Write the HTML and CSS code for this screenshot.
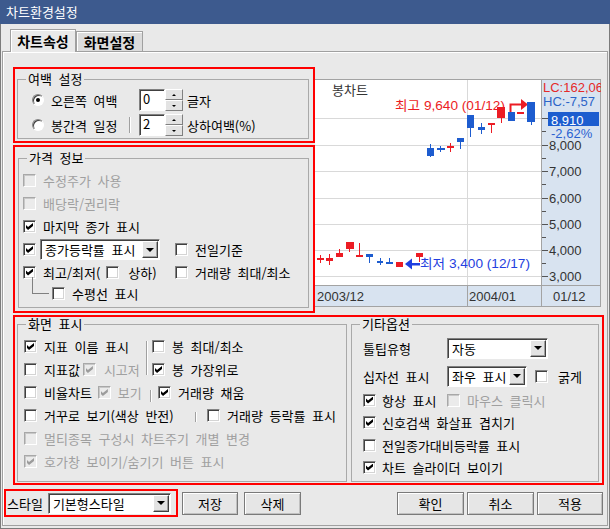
FILE: index.html
```html
<!DOCTYPE html>
<html lang="ko">
<head>
<meta charset="utf-8">
<title>차트환경설정</title>
<link rel="stylesheet" href="styles.css">
</head>
<body>
<div class="window">
  <div class="titlebar">차트환경설정</div>
  <div class="client">
    <div class="tabs">
      <div class="tab tab-active">차트속성</div>
      <div class="tab">화면설정</div>
    </div>
    <div class="panel">
      <div class="top">
        <div class="leftcol">
          <div class="mark mark-margin">
            <fieldset class="group g-margin">
              <legend>여백 설정</legend>
              <div class="mrow">
                <div class="mcol"><span class="radio on"></span><span>오른쪽 여백</span></div>
                <div class="spin"><span class="spin-val">0</span><span class="spin-btns"><span class="spin-up"></span><span class="spin-dn"></span></span></div>
                <span class="unit">글자</span>
              </div>
              <div class="mrow">
                <div class="mcol"><span class="radio"></span><span>봉간격 일정</span><span class="vsep vsep-m"></span></div>
                <div class="spin"><span class="spin-val">2</span><span class="spin-btns"><span class="spin-up"></span><span class="spin-dn"></span></span></div>
                <span class="unit">상하여백(%)</span>
              </div>
            </fieldset>
          </div>
          <div class="mark mark-price">
            <fieldset class="group g-price">
              <legend>가격 정보</legend>
              <div class="prow"><span class="cb dis"></span><span class="lbl dim">수정주가 사용</span></div>
              <div class="prow"><span class="cb dis"></span><span class="lbl dim">배당락/권리락</span></div>
              <div class="prow"><span class="cb on"></span><span class="lbl">마지막 종가 표시</span></div>
              <div class="prow">
                <div class="pcol"><span class="cb on"></span><div class="combo combo-rate"><span class="combo-text">종가등락률 표시</span><span class="combo-btn"></span></div></div>
                <span class="cb"></span><span class="lbl">전일기준</span>
              </div>
              <div class="prow prow-5">
                <div class="pcol"><span class="cb on"></span><span class="lbl">최고/최저(</span><span class="cb cb-hl"></span><span class="lbl-hl">상하)</span></div>
                <span class="cb"></span><span class="lbl">거래량 최대/최소</span>
              </div>
              <div class="prow prow-6"><span class="tree"></span><span class="cb"></span><span class="lbl">수평선 표시</span></div>
            </fieldset>
          </div>
        </div>
        <div class="chart">
          <svg class="chart-svg" width="286" height="228" viewBox="315 79 286 228">
            <defs>
              <clipPath id="clip8000"><rect x="549" y="140" width="51" height="14"/></clipPath>
            </defs>
            <rect x="315" y="79" width="286" height="228" class="bg-plot"/>
            <rect x="541" y="79" width="60" height="228" class="bg-axis"/>
            <rect x="315" y="286" width="286" height="21" class="bg-axis"/>
            <g class="grid">
              <line x1="315" y1="118.5" x2="541" y2="118.5"/>
              <line x1="315" y1="145.5" x2="541" y2="145.5"/>
              <line x1="315" y1="171.5" x2="541" y2="171.5"/>
              <line x1="315" y1="198.5" x2="541" y2="198.5"/>
              <line x1="315" y1="224.5" x2="541" y2="224.5"/>
              <line x1="315" y1="250.5" x2="541" y2="250.5"/>
              <line x1="315" y1="276.5" x2="541" y2="276.5"/>
              <line x1="467.5" y1="79" x2="467.5" y2="286"/>
            </g>
            <g class="frame">
              <line x1="315" y1="79.5" x2="601" y2="79.5"/>
              <line x1="600.5" y1="79" x2="600.5" y2="307"/>
              <line x1="315" y1="306.5" x2="601" y2="306.5"/>
              <line x1="541.5" y1="79" x2="541.5" y2="307"/>
              <line x1="315" y1="285.5" x2="601" y2="285.5"/>
              <line x1="467.5" y1="286" x2="467.5" y2="307"/>
            </g>
            <g class="ticks">
              <line x1="542" y1="118.5" x2="548" y2="118.5"/>
              <line x1="542" y1="131.5" x2="546" y2="131.5"/>
              <line x1="542" y1="145.5" x2="548" y2="145.5"/>
              <line x1="542" y1="158.5" x2="546" y2="158.5"/>
              <line x1="542" y1="171.5" x2="548" y2="171.5"/>
              <line x1="542" y1="184.5" x2="546" y2="184.5"/>
              <line x1="542" y1="198.5" x2="548" y2="198.5"/>
              <line x1="542" y1="211.5" x2="546" y2="211.5"/>
              <line x1="542" y1="224.5" x2="548" y2="224.5"/>
              <line x1="542" y1="237.5" x2="546" y2="237.5"/>
              <line x1="542" y1="250.5" x2="548" y2="250.5"/>
              <line x1="542" y1="263.5" x2="546" y2="263.5"/>
              <line x1="542" y1="276.5" x2="548" y2="276.5"/>
            </g>
            <text class="ct t-axis" x="549" y="150" clip-path="url(#clip8000)">8,000</text>
            <text class="ct t-axis" x="549" y="176">7,000</text>
            <text class="ct t-axis" x="549" y="203">6,000</text>
            <text class="ct t-axis" x="549" y="229">5,000</text>
            <text class="ct t-axis" x="549" y="255">4,000</text>
            <text class="ct t-axis" x="549" y="281">3,000</text>
            <text class="ct t-lc" x="543" y="92">LC:162,06</text>
            <text class="ct t-hc" x="543" y="106">HC:-7,57</text>
            <rect x="548" y="112" width="51" height="14" class="cur-box"/>
            <text class="ct t-cur" x="551" y="124.5">8,910</text>
            <text class="ct t-pct" x="551" y="138">-2,62%</text>
            <text class="ct t-date" x="317" y="301">2003/12</text>
            <text class="ct t-date" x="469" y="301">2004/01</text>
            <text class="ct t-date" x="553" y="301">01/12</text>
            <text class="ct-kr t-title" x="332" y="95">봉차트</text>
            <g class="up">
              <rect x="317" y="258" width="7" height="2"/><rect x="320" y="255" width="1" height="8"/>
              <rect x="326" y="258" width="7" height="3"/><rect x="329" y="254" width="1" height="11"/>
              <rect x="336" y="253" width="7" height="4"/><rect x="339" y="249" width="1" height="8"/>
              <rect x="346" y="242" width="8" height="7"/><rect x="349" y="249" width="1" height="3"/>
              <rect x="356" y="255" width="7" height="2"/><rect x="359" y="243" width="1" height="12"/>
              <rect x="396" y="262" width="7" height="5"/>
              <rect x="416" y="253" width="7" height="4"/><rect x="419" y="257" width="1" height="5"/>
              <rect x="447" y="146" width="7" height="2"/><rect x="450" y="143" width="1" height="9"/>
              <rect x="488" y="123" width="7" height="2"/><rect x="491" y="125" width="1" height="8"/>
              <rect x="497" y="107" width="8" height="11"/><rect x="501" y="118" width="1" height="5"/>
              <rect x="517" y="112" width="7" height="2"/>
              <polygon points="521,99 528,104.5 521,110"/>
              <path class="arrow-red" d="M510.5 113 V104.5 H522"/>
            </g>
            <g class="down">
              <rect x="366" y="254" width="7" height="3"/><rect x="369" y="257" width="1" height="6"/>
              <rect x="377" y="261" width="6" height="2"/><rect x="380" y="258" width="1" height="7"/>
              <rect x="386" y="262" width="7" height="2"/><rect x="389" y="258" width="1" height="6"/>
              <rect x="427" y="148" width="7" height="8"/><rect x="430" y="144" width="1" height="13"/>
              <rect x="437" y="148" width="8" height="2"/><rect x="440" y="146" width="1" height="6"/>
              <rect x="457" y="138" width="7" height="4"/><rect x="460" y="142" width="1" height="7"/>
              <rect x="467" y="115" width="7" height="13"/><rect x="470" y="128" width="1" height="9"/>
              <rect x="478" y="127" width="7" height="3"/><rect x="481" y="123" width="1" height="11"/>
              <rect x="508" y="112" width="7" height="9"/>
              <rect x="527" y="102" width="8" height="20"/><rect x="531" y="122" width="1" height="3"/>
            </g>
            <g class="low-arrow">
              <polygon points="405,264 412,258.5 412,269.5"/>
              <rect x="411" y="263" width="9" height="2.5"/>
            </g>
            <text class="ct t-hi" x="395" y="110" textLength="110" lengthAdjust="spacingAndGlyphs">최고 9,640 (01/12)</text>
            <text class="ct t-lo" x="420" y="268" textLength="110" lengthAdjust="spacingAndGlyphs">최저 3,400 (12/17)</text>
          </svg>
        </div>
      </div>
      <div class="mark mark-screen">
        <fieldset class="group g-screen">
          <legend>화면 표시</legend>
          <div class="srow">
            <div class="scol scol-a"><span class="cb on"></span><span class="lbl">지표 이름 표시</span></div>
            <span class="vsep vsep-1"></span><span class="cb"></span><span class="lbl">봉 최대/최소</span>
          </div>
          <div class="srow">
            <div class="scol scol-a"><span class="cb"></span><span class="lbl">지표값</span><span class="cb dis on cb-m1"></span><span class="dim lbl-m1">시고저</span></div>
            <span class="vsep vsep-2"></span><span class="cb on"></span><span class="lbl">봉 가장위로</span>
          </div>
          <div class="srow">
            <div class="scol scol-b"><span class="cb"></span><span class="lbl">비율차트</span><span class="cb dis on cb-m2"></span><span class="dim lbl-m2">보기</span></div>
            <span class="vsep vsep-3"></span><span class="cb on"></span><span class="lbl">거래량 채움</span>
          </div>
          <div class="srow">
            <div class="scol scol-c"><span class="cb"></span><span class="lbl">거꾸로 보기(색상 반전)</span></div>
            <span class="vsep vsep-4"></span><span class="cb"></span><span class="lbl">거래량 등락률 표시</span>
          </div>
          <div class="srow"><span class="cb dis"></span><span class="lbl dim">멀티종목 구성시 차트주기 개별 변경</span></div>
          <div class="srow"><span class="cb dis on"></span><span class="lbl dim">호가창 보이기/숨기기 버튼 표시</span></div>
        </fieldset>
        <fieldset class="group g-etc">
          <legend>기타옵션</legend>
          <div class="erow">
            <div class="ecol">툴팁유형</div>
            <div class="combo combo-tip"><span class="combo-text">자동</span><span class="combo-btn"></span></div>
          </div>
          <div class="erow erow-2">
            <div class="ecol">십자선 표시</div>
            <div class="combo combo-cross"><span class="combo-text">좌우 표시</span><span class="combo-btn"></span></div>
            <span class="cb cb-bold"></span><span class="lbl-bold">굵게</span>
          </div>
          <div class="erow erow-3">
            <div class="ecol"><span class="cb on"></span><span class="lbl-e">항상 표시</span></div>
            <span class="cb dis"></span><span class="lbl dim">마우스 클릭시</span>
          </div>
          <div class="erow erow-4"><span class="cb on"></span><span class="lbl-e">신호검색 화살표 겹치기</span></div>
          <div class="erow erow-5"><span class="cb"></span><span class="lbl-e">전일종가대비등락률 표시</span></div>
          <div class="erow erow-6"><span class="cb on"></span><span class="lbl-e">차트 슬라이더 보이기</span></div>
        </fieldset>
      </div>
      <div class="footer">
        <div class="mark mark-style">
          <span>스타일</span>
          <div class="combo combo-style"><span class="combo-text">기본형스타일</span><span class="combo-btn"></span></div>
        </div>
        <button class="btn btn-save">저장</button>
        <button class="btn btn-del">삭제</button>
        <span class="spacer"></span>
        <button class="btn btn-ok">확인</button>
        <button class="btn btn-cancel">취소</button>
        <button class="btn btn-apply">적용</button>
      </div>
    </div>
  </div>
</div>
</body>
</html>
```

FILE: styles.css
```css
* { box-sizing: border-box; }
html, body { margin: 0; padding: 0; }
body {
  width: 610px; height: 529px; overflow: hidden;
  background: #e9e9e9;
  font-family: "Noto Sans CJK KR", "Noto Sans", sans-serif;
  font-size: 13px; line-height: 15px; color: #000;
  word-spacing: 3px;
}
.window {
  width: 610px; height: 529px;
  display: flex; flex-direction: column;
  border: 1px solid #7b7b7b; border-top: none;
  background: #e9e9e9;
}
.titlebar {
  height: 24px; flex: none; margin: 0 -1px;
  background: #3d5a8e; color: #fff;
  font-size: 13px; line-height: 24px; padding-left: 6px;
  word-spacing: 0;
}
.client { flex: 1; display: flex; flex-direction: column; padding: 5px 1px 2px 1px; }
.tabs { height: 22px; flex: none; display: flex; align-items: flex-end; padding-left: 8px; }
.tab {
  width: 67px; height: 20px;
  display: flex; align-items: center; justify-content: center;
  font-weight: bold; font-size: 14px; line-height: 16px;
  background: #dcdcdc;
  border: 1px solid #a0a0a0; border-bottom: none;
  box-shadow: inset 1px 1px 0 #fff;
}
.tab-active {
  width: 66px; height: 23px; margin-bottom: -1px;
  position: relative; z-index: 1;
  background: #e9e9e9;
}
.panel {
  flex: 1;
  border: 1px solid #a0a0a0;
  box-shadow: inset 1px 1px 0 #fff;
  padding: 15px 3px 0 1px;
  display: flex; flex-direction: column;
}
.top { display: flex; margin-left: 9px; }
.leftcol { width: 302px; flex: none; display: flex; flex-direction: column; gap: 2px; }
.mark { border: 2px solid #f00; }
.mark-margin { height: 76px; }
.mark-price { height: 168px; }
.chart { margin-top: 12px; width: 286px; height: 228px; flex: none; word-spacing: 0; }
.chart-svg { display: block; }

/* group boxes */
.group { margin: 0; padding: 0; border: 1px solid #a9a9a9; min-width: 0; }
.group legend { padding: 0 2px; font-size: 13px; line-height: 14px; }

.g-margin { margin: 3px 4px 2px 2px; padding: 3px 0 2px 14px; }
.g-margin legend { margin-left: -6px; }
.mrow { display: flex; align-items: center; height: 22px; }
.mrow + .mrow { margin-top: 3px; }
.mcol { width: 107px; height: 100%; display: flex; align-items: center; flex: none; white-space: nowrap; }
.unit { margin-left: 4px; white-space: nowrap; }

.radio {
  width: 12px; height: 12px; flex: none; border-radius: 50%;
  background: #fff;
  border: 1px solid; border-color: #848484 #fff #fff #848484;
  box-shadow: inset 1px 1px 0 #404040;
  display: inline-flex; align-items: center; justify-content: center;
  margin-right: 7px;
}
.radio.on::after { content: ""; width: 4px; height: 4px; border-radius: 50%; background: #000; }

.spin { width: 44px; height: 22px; display: flex; flex: none; }
.spin-val {
  width: 26px; background: #fff;
  border: 1px solid; border-color: #808080 #fff #fff #808080;
  box-shadow: inset 1px 1px 0 #404040;
  padding: 1px 0 0 3px; line-height: 15px;
}
.spin-btns { width: 18px; display: flex; flex-direction: column; }
.spin-up, .spin-dn {
  flex: 1; display: flex; align-items: center; justify-content: center;
  background: #e3e3e3;
  border: 1px solid; border-color: #fff #808080 #808080 #fff;
}
.spin-up::after { content: ""; border-style: solid; border-color: transparent transparent #000; border-width: 0 2px 2px; }
.spin-dn::after { content: ""; border-style: solid; border-color: #000 transparent transparent; border-width: 2px 2px 0; }

/* checkboxes */
.cb {
  width: 13px; height: 13px; flex: none;
  display: inline-flex; align-items: center; justify-content: center;
  background: #fff;
  border: 1px solid; border-color: #848484 #fff #fff #848484;
  box-shadow: inset 1px 1px 0 #404040, inset -1px -1px 0 #d4d4d4;
}
.cb.on::after {
  content: ""; width: 7px; height: 7px; background: #000;
  clip-path: polygon(0 29%, 29% 57%, 100% 0, 100% 43%, 29% 100%, 0 71%);
}
.cb.dis {
  background: #ebebeb;
  border-color: #a8a8a8 #fff #fff #a8a8a8;
  box-shadow: inset 1px 1px 0 #c8c8c8;
}
.cb.dis.on::after { background: #9c9c9c; }
.lbl { margin-left: 7px; white-space: nowrap; }
.dim { color: #a0a0a0; }

/* price group */
.g-price { margin: 4px 4px 3px 3px; padding: 4px 0 4px 4px; }
.g-price legend { margin-left: 4px; }
.prow { display: flex; align-items: center; height: 23px; }
.prow-5 { height: 22px; }
.prow-6 { height: 20px; }
.pcol { width: 152px; height: 100%; flex: none; display: flex; align-items: center; }
.cb-hl { margin-left: 6px; }
.lbl-hl { margin-left: 9px; white-space: nowrap; }
.tree {
  width: 17px; height: 17px; flex: none;
  align-self: flex-start; margin: -6px 3px 0 9px;
  border-left: 1px solid #808080; border-bottom: 1px solid #808080;
}

/* combo boxes */
.combo {
  display: flex; height: 21px; flex: none;
  background: #fff;
  border: 1px solid; border-color: #808080 #fff #fff #808080;
  box-shadow: inset 1px 1px 0 #404040;
  padding: 1px;
}
.combo-text {
  flex: 1; display: flex; align-items: center;
  padding-left: 3px; line-height: 15px; white-space: nowrap; overflow: hidden;
}
.combo-btn {
  width: 16px; flex: none;
  display: flex; align-items: center; justify-content: center;
  background: #e3e3e3;
  border: 1px solid; border-color: #fff #404040 #404040 #fff;
  box-shadow: inset -1px -1px 0 #a0a0a0;
}
.combo-btn::after { content: ""; border-style: solid; border-color: #000 transparent transparent; border-width: 4px 4px 0; }
.combo-rate { margin-left: 4px; width: 120px; }
.combo-tip { width: 101px; height: 21px; }
.combo-cross { width: 80px; }
.combo-style { margin-left: 5px; width: 123px; }

/* lower section */
.mark-screen {
  margin: 2px 0 0 9px; width: 591px; height: 170px;
  display: flex; gap: 4px; padding: 0 3px 0 2px;
}
.g-screen { width: 330px; margin-bottom: 1px; padding: 4px 0 0 6px; }
.g-screen legend { margin-left: 2px; }
.g-etc { width: 248px; margin-bottom: 1px; padding: 6px 0 0 11px; }
.g-etc legend { margin-left: -3px; }
.srow { display: flex; align-items: center; height: 23px; }
.scol { height: 100%; flex: none; display: flex; align-items: center; }
.scol-a { width: 122px; }
.scol-b { width: 126px; }
.scol-c { width: 171px; }
.vsep { width: 2px; flex: none; border-left: 1px solid #a0a0a0; border-right: 1px solid #fff; }
.vsep-m { height: 16px; margin-left: auto; margin-right: 8px; }
.vsep-1 { align-self: flex-end; height: 17px; margin-right: 4px; }
.vsep-2 { align-self: flex-start; height: 17px; margin-right: 4px; }
.vsep-3 { align-self: flex-end; height: 12px; margin-bottom: 2px; margin-right: 6px; }
.vsep-4 { align-self: flex-end; height: 10px; margin-bottom: 5px; margin-right: 10px; }
.cb-m1 { margin-left: 3px; }
.lbl-m1 { margin-left: 8px; white-space: nowrap; }
.cb-m2 { margin-left: 6px; }
.lbl-m2 { margin-left: 7px; white-space: nowrap; }

.erow { display: flex; align-items: center; height: 22px; }
.erow-2 { margin-top: 6px; }
.erow-3 { margin-top: 2px; }
.erow-4, .erow-5 { height: 23px; }
.erow-6 { height: 20px; }
.ecol { width: 84px; height: 100%; flex: none; display: flex; align-items: center; white-space: nowrap; }
.lbl-e { margin-left: 6px; white-space: nowrap; }
.cb-bold { margin-left: 8px; }
.lbl-bold { margin-left: 10px; white-space: nowrap; }

/* footer */
.footer { display: flex; align-items: center; margin-top: 4px; height: 28px; }
.mark-style { width: 174px; height: 28px; flex: none; display: flex; align-items: center; padding-left: 1px; white-space: nowrap; }
.spacer { flex: 1; }
.btn {
  height: 23px; flex: none; margin: 0; padding: 0;
  display: flex; align-items: center; justify-content: center;
  font-family: inherit; font-size: 13px; line-height: 15px; color: #000;
  background: #e6e6e6;
  border: 1px solid #7a7a7a;
  box-shadow: inset 1px 1px 0 #fff, inset -1px -1px 0 #c0c0c0;
  border-radius: 0;
}
.btn-save { margin-left: 4px; width: 56px; }
.btn-del { margin-left: 6px; width: 57px; }
.btn-ok { width: 67px; }
.btn-cancel { margin-left: 3px; width: 67px; }
.btn-apply { margin-left: 3px; width: 66px; margin-right: 1px; }

/* chart */
.bg-plot { fill: #fff; }
.bg-axis { fill: #d8e3f0; }
.grid line { stroke: #d9d9d9; stroke-width: 1; }
.frame line { stroke: #a3a3a3; stroke-width: 1; }
.ticks line { stroke: #555; stroke-width: 1; }
.ct { font-family: "Liberation Sans", "Noto Sans CJK KR", sans-serif; font-size: 13px; }
.ct-kr { font-family: "Noto Sans CJK KR", sans-serif; font-size: 13px; }
.t-axis, .t-date { fill: #333; }
.t-title { fill: #333; }
.t-lc { fill: #e52a2a; }
.t-hc { fill: #2c64c8; }
.cur-box { fill: #1c5dcf; }
.t-cur { fill: #fff; }
.t-pct { fill: #2a62d0; }
.up { fill: #ec1c24; }
.down { fill: #1d5ccf; }
.arrow-red { fill: none; stroke: #ec1c24; stroke-width: 2; }
.low-arrow { fill: #1f3fe0; }
.t-hi { fill: #ec1c24; }
.t-lo { fill: #2440e0; }
```
